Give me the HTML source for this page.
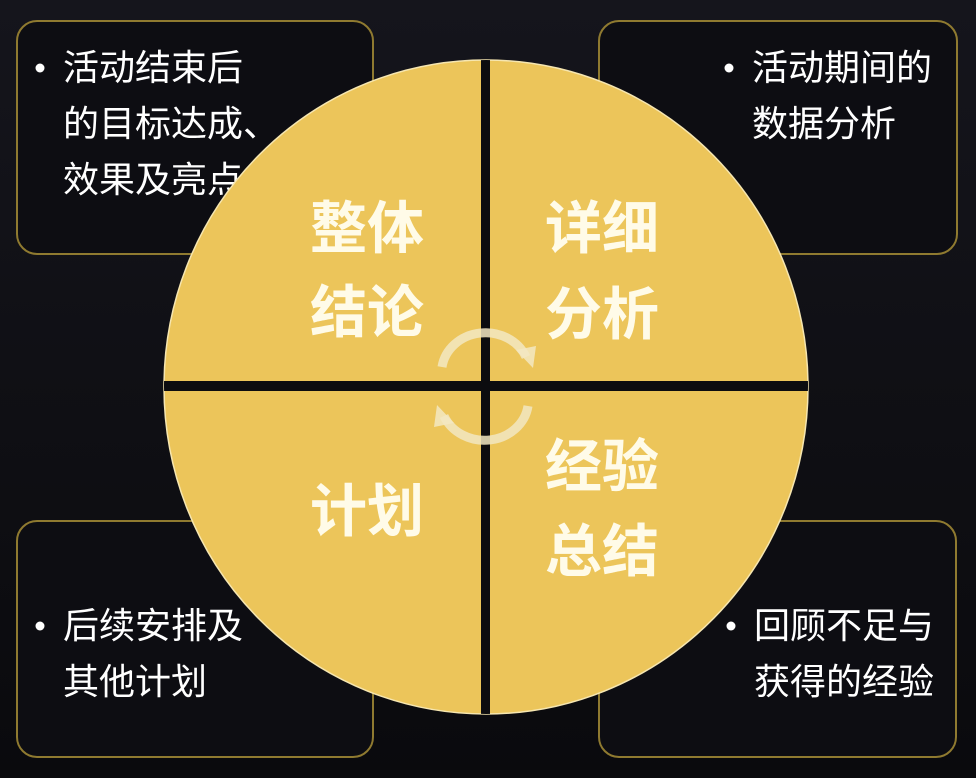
<!DOCTYPE html>
<html><head><meta charset="utf-8"><style>
html,body{margin:0;padding:0;width:976px;height:778px;overflow:hidden;background:#101016;}
svg{display:block}
text{font-family:"Liberation Sans","Noto Sans CJK SC",sans-serif;}
.s{fill:#fff;font-size:36px;}
.b{fill:#fffbe8;font-size:57px;font-weight:bold;}
</style></head><body>
<svg width="976" height="778" viewBox="0 0 976 778">
<defs>
<linearGradient id="bg" x1="0" y1="0" x2="0" y2="1">
<stop offset="0" stop-color="#15151c"/><stop offset="1" stop-color="#0a0a0d"/>
</linearGradient>
<clipPath id="c"><ellipse cx="486" cy="387" rx="322" ry="327"/></clipPath>
</defs>
<rect width="976" height="778" fill="url(#bg)"/>
<g fill="#0d0d12" stroke="#8f7a30" stroke-width="2">
<rect x="17" y="21" width="356" height="233" rx="20"/>
<rect x="599" y="21" width="358" height="233" rx="20"/>
<rect x="17" y="521" width="356" height="236" rx="20"/>
<rect x="599" y="521" width="357" height="236" rx="20"/>
</g>
<g class="s">
<circle cx="40" cy="68" r="4.5" fill="#fff"/>
<text class="s" x="63" y="80">活动结束后</text>
<text class="s" x="63" y="136">的目标达成、</text>
<text class="s" x="63" y="192">效果及亮点</text>
<circle cx="729" cy="68" r="4.5" fill="#fff"/>
<text class="s" x="752" y="80">活动期间的</text>
<text class="s" x="752" y="136">数据分析</text>
<circle cx="40" cy="626" r="4.5" fill="#fff"/>
<text class="s" x="63" y="638">后续安排及</text>
<text class="s" x="63" y="694">其他计划</text>
<circle cx="731" cy="626" r="4.5" fill="#fff"/>
<text class="s" x="754" y="638">回顾不足与</text>
<text class="s" x="754" y="694">获得的经验</text>
</g>
<ellipse cx="486" cy="387" rx="322" ry="327" fill="#ecc55a" stroke="#f6e6b0" stroke-width="1.5"/>
<g clip-path="url(#c)">
<rect x="481" y="55" width="9" height="665" fill="#0c0c0f"/>
<rect x="160" y="381" width="655" height="10" fill="#0c0c0f"/>
</g>
<g fill="none" stroke="#f3e8c2" stroke-width="9" opacity="0.85">
<path d="M442 367 A44 40 0 0 1 526 357"/>
<path d="M528 406 A44 40 0 0 1 444 416"/>
</g>
<g fill="#f3e8c2" opacity="0.85">
<polygon points="516,350 536,346 533,368"/>
<polygon points="454,423 434,427 437,405"/>
</g>
<text class="b" x="310" y="248">整体</text>
<text class="b" x="310" y="332">结论</text>
<text class="b" x="545" y="248">详细</text>
<text class="b" x="545" y="334">分析</text>
<text class="b" x="310" y="531">计划</text>
<text class="b" x="545" y="486">经验</text>
<text class="b" x="545" y="571">总结</text>
</svg>
</body></html>
